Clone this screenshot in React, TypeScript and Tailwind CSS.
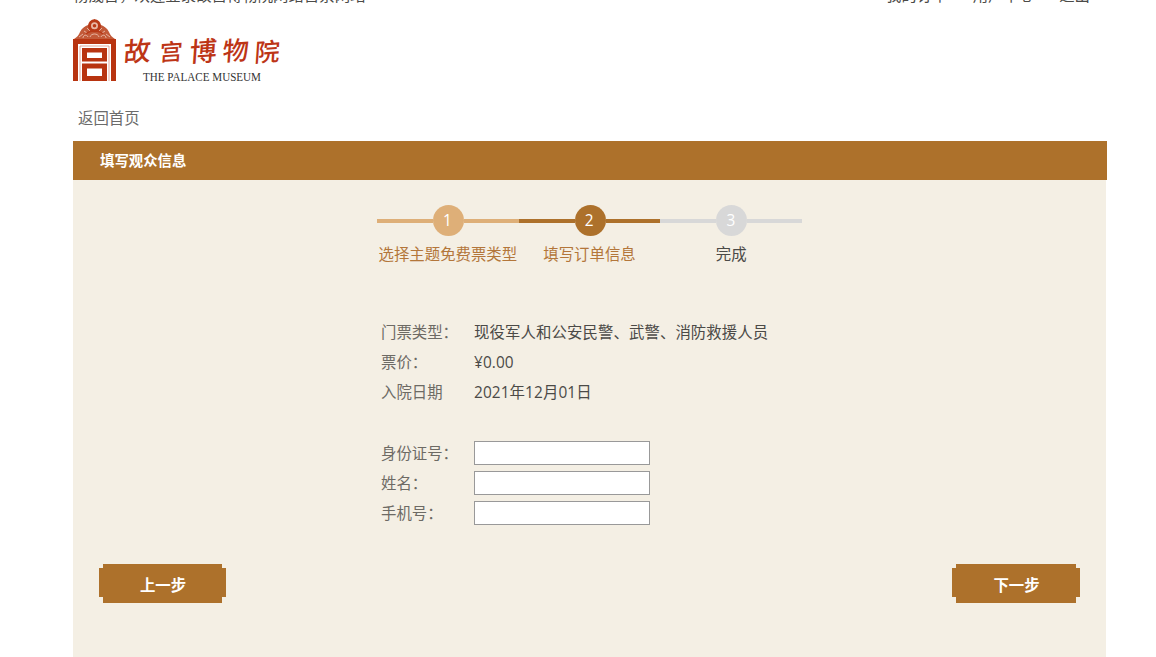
const steps = [
  { no: 1, label: '选择主题免费票类型', color: 'bg-[#deaf78]', text: 'text-[#b3763a]' },
  { no: 2, label: '填写订单信息', color: 'bg-[#ad712b]', text: 'text-[#b3763a]' },
  { no: 3, label: '完成', color: 'bg-[#d8d8d8]', text: 'text-[#4b4a47]' },
];

const details = [
  { label: '门票类型：', value: '现役军人和公安民警、武警、消防救援人员' },
  { label: '票价：', value: '¥0.00' },
  { label: '入院日期', value: '2021年12月01日' },
];

const fields = ['身份证号：', '姓名：', '手机号：'];

function Logo() {
  return (
    <svg width="212" height="68" viewBox="0 0 212 68" className="block">
      {/* roof */}
      <path d="M1 20C4 18 6 16 7 13C9 9 12 7 15 6L21.5 0L28 6C31 7 34 9 36 13C37 16 39 18 42 20Z" fill="#c25a39" />
      <g fill="none" stroke="#f0c8b9" strokeWidth="0.8">
        <path d="M6 18l4-3M10 19c0-3 4-4 5-1M11 12l3 2M14 9l3 3M17 18c1-4 8-4 9 0M37 18l-4-3M33 19c0-3-4-4-5-1M32 12l-3 2M29 9l-3 3" />
      </g>
      <circle cx="21.5" cy="6.800" r="5" fill="#e9b7a5" stroke="#b83a18" strokeWidth="3" />
      <circle cx="21.5" cy="6.800" r="1.800" fill="#b83a18" />
      <path d="M13 15c4-4 13-4 17 0" fill="none" stroke="#b83a18" strokeWidth="1.6" />
      {/* gate */}
      <path d="M0 20h43v42h-5V25H5v37H0z" fill="#b83410" />
      <path d="M7 62V27h29v35" fill="none" stroke="#dc9580" strokeWidth="0.8" />
      <path
        fillRule="evenodd"
        d="M9 29h25v13.500H9zM14 33.500v5.500h15v-5.500zM9 44.500h25V62H9zM14 49.500v7.500h15v-7.500z"
        fill="#b83410"
      />
      <g
        fill="#bd3516"
        fontFamily="'Noto Sans CJK SC', sans-serif"
        fontWeight="500"
      >
        <text transform="translate(50 43) skewX(-8) rotate(-4)" fontSize="27">故</text>
        <text transform="translate(86 42) skewX(-8) rotate(-4)" fontSize="23">宫</text>
        <text transform="translate(116 43) skewX(-8) rotate(-4)" fontSize="27">博</text>
        <text transform="translate(149 42) skewX(-8) rotate(-4)" fontSize="26">物</text>
        <text transform="translate(181 43) skewX(-8) rotate(-4)" fontSize="25">院</text>
      </g>
      <text
        x="70"
        y="61.500"
        fill="#333"
        fontFamily="'Liberation Serif', serif"
        fontSize="11.500"
        textLength="118"
        lengthAdjust="spacingAndGlyphs"
      >
        THE PALACE MUSEUM
      </text>
    </svg>
  );
}

function NotchedButton({ children }: { children: string }) {
  return (
    <button className="h-[39px] w-[127px] bg-[#ad712b] pt-1 pl-px text-[15.4px] font-bold text-white last:w-[128px] [clip-path:polygon(4px_0,calc(100%-4px)_0,calc(100%-4px)_4px,100%_4px,100%_33px,calc(100%-4px)_33px,calc(100%-4px)_100%,4px_100%,4px_33px,0_33px,0_4px,4px_4px)]">
      {children}
    </button>
  );
}

export default function App() {
  return (
    <div className="h-[657px] overflow-hidden bg-white font-['Open_Sans','Noto_Sans_CJK_SC',sans-serif] text-[15.4px] text-[#4b4a47]">
      <div className="ml-[73px] w-[1034px]">
        <div className="-mt-[15px] flex h-[34px] justify-between pr-[17px] leading-[22px]">
          <span>杨晟吾，欢迎登录故宫博物院网络售票网站</span>
          <div className="flex gap-[25px]">
            <a href="#">我的订单</a>
            <a href="#">用户中心</a>
            <a href="#">退出</a>
          </div>
        </div>

        <Logo />

        <div className="h-[54px] pt-[21px] pl-[5px] leading-[22px] text-[#6b6b6b]">
          <a href="#">返回首页</a>
        </div>

        <h1 className="h-[39px] bg-[#ad712b] pl-[27px] text-[14.4px] leading-[40px] font-bold text-white">
          填写观众信息
        </h1>

        <div className="h-[477px] w-[1033px] bg-[#f4efe4] pt-[25px]">
          <ol className="ml-[304px] flex w-[425px]">
            {steps.map((step) => (
              <li key={step.no} className={`flex-1 text-center ${step.text}`}>
                <div className="flex items-center">
                  <div className={`h-[4px] w-[56px] ${step.color}`} />
                  <div className={`h-[31px] w-[31px] rounded-full pr-[2px] text-center leading-[31px] text-white ${step.color}`}>
                    {step.no}
                  </div>
                  <div className={`h-[4px] flex-1 ${step.color}`} />
                </div>
                <div className="mt-[8px] leading-[22px] whitespace-nowrap">{step.label}</div>
              </li>
            ))}
          </ol>

          <dl className="mt-[52px] ml-[308px]">
            {details.map((item) => (
              <div key={item.label} className="flex h-[30px] leading-[30px]">
                <dt className="w-[93px] text-[#6d6a64]">{item.label}</dt>
                <dd className="tracking-[0.1px]">{item.value}</dd>
              </div>
            ))}
          </dl>

          <form className="mt-[30px] ml-[308px]">
            {fields.map((label) => (
              <label key={label} className="flex h-[30px] items-center">
                <span className="w-[93px] pt-[2px] text-[#6d6a64]">{label}</span>
                <input className="h-[24px] w-[176px] border border-[#999] bg-white px-1" />
              </label>
            ))}
          </form>

          <div className="mt-[36px] flex justify-between pr-[26px] pl-[26px]">
            <NotchedButton>上一步</NotchedButton>
            <NotchedButton>下一步</NotchedButton>
          </div>
        </div>
      </div>
    </div>
  );
}
